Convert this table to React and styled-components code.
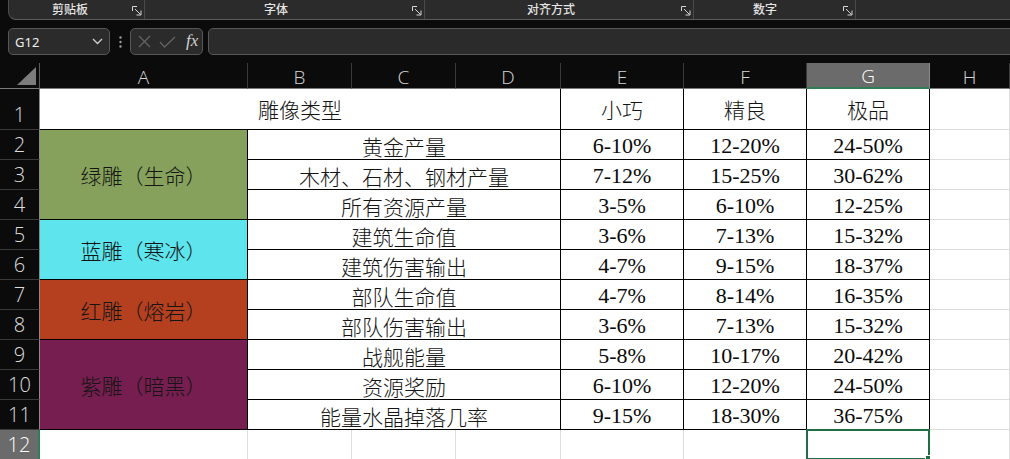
import React from 'react';
import styled, { createGlobalStyle } from 'styled-components';

const GlobalStyle = createGlobalStyle`
  html, body { margin:0; padding:0; background:#0b0b0b; overflow:hidden; }
  body { width:1010px; height:459px; font-family:"Noto Sans","Noto Sans CJK SC",sans-serif; }
`;

const groups = [
  { label: '剪贴板', w: 136, indent: 43 },
  { label: '字体', w: 280, indent: 119 },
  { label: '对齐方式', w: 269, indent: 102 },
  { label: '数字', w: 162, indent: 59 },
];

const fills = {
  green: '#86a15b',
  cyan: '#5de4ec',
  red: '#b4401f',
  purple: '#761e4f',
};

// colored label blocks in column A
const blocks = [
  { label: '绿雕（生命）', fill: fills.green, row: 2, rows: 3 },
  { label: '蓝雕（寒冰）', fill: fills.cyan, row: 5, rows: 2 },
  { label: '红雕（熔岩）', fill: fills.red, row: 7, rows: 2 },
  { label: '紫雕（暗黑）', fill: fills.purple, row: 9, rows: 3 },
];

const rows = [
  ['黄金产量', '6-10%', '12-20%', '24-50%'],
  ['木材、石材、钢材产量', '7-12%', '15-25%', '30-62%'],
  ['所有资源产量', '3-5%', '6-10%', '12-25%'],
  ['建筑生命值', '3-6%', '7-13%', '15-32%'],
  ['建筑伤害输出', '4-7%', '9-15%', '18-37%'],
  ['部队生命值', '4-7%', '8-14%', '16-35%'],
  ['部队伤害输出', '3-6%', '7-13%', '15-32%'],
  ['战舰能量', '5-8%', '10-17%', '20-42%'],
  ['资源奖励', '6-10%', '12-20%', '24-50%'],
  ['能量水晶掉落几率', '9-15%', '18-30%', '36-75%'],
];

const cols = ['A', 'B', 'C', 'D', 'E', 'F', 'G', 'H'];

const Page = styled.div`
  width:1010px;
  height:459px;
  overflow:hidden;
`;

const Ribbon = styled.div`
  display:flex;
  height:19px;
  margin-left:8px;
  background:#2b2b2b;
  border-left:1px solid #4d4d4d;
  border-bottom:1px solid #5c5c5c;
  border-bottom-left-radius:8px;
`;

const Group = styled.div`
  display:flex;
  align-items:center;
  box-sizing:border-box;
  width:${p => p.$w}px;
  flex:none;
  padding-left:${p => p.$indent}px;
  border-right:1px solid #4a4a4a;
  color:#e4e4e4;
  font-size:12px;
  font-family:"Noto Sans CJK SC",sans-serif;
  font-weight:500;
  line-height:16px;
  span { margin-top:-2px; }
`;

const Launcher = styled.svg`
  margin-left:auto;
  margin-right:2px;
  margin-top:3px;
`;

const FormulaRow = styled.div`
  display:flex;
  align-items:center;
  height:27px;
  margin-top:8px;
`;

const Box = styled.div`
  box-sizing:border-box;
  height:27px;
  background:#2b2b2b;
  border:1px solid #575757;
  border-radius:5px;
  display:flex;
  align-items:center;
`;

const NameBox = styled(Box)`
  width:102px;
  margin-left:8px;
  padding:0 6px 0 6px;
  justify-content:space-between;
  color:#eeeeee;
  font-size:13px;
  font-family:"Noto Sans",sans-serif;
`;

const Dots = styled.div`
  width:20px;
  display:flex;
  justify-content:center;
`;

const IconBox = styled(Box)`
  width:73px;
  padding-left:7px;
  gap:8px;
`;

const Fx = styled.span`
  font-family:"Liberation Serif",serif;
  font-style:italic;
  font-size:17px;
  color:#d2d2d2;
  margin-left:2px;
  margin-top:-2px;
`;

const Input = styled(Box)`
  flex:1;
  margin-left:5px;
  margin-right:-12px;
`;

const Sheet = styled.div`
  margin-top:8px;
  display:grid;
  grid-template-columns:40px 208px 104px 104px 105px 123px 123px 123px 1fr;
  grid-template-rows:26px 41px repeat(11, 30px);
  background:#0b0b0b;
`;

const Corner = styled.div`
  grid-column:1;
  grid-row:1;
  display:flex;
  align-items:flex-end;
  justify-content:flex-end;
  padding:0 3px 3px 0;
  border-right:1px solid #5a5a5a;
  border-bottom:1px solid #7a7a7a;
`;

const ColHead = styled.div`
  display:flex;
  align-items:center;
  justify-content:center;
  background:${p => (p.$active ? '#6b6b6b' : '#0b0b0b')};
  color:${p => (p.$active ? '#ffffff' : '#d6d6d6')};
  border-right:1px solid ${p => (p.$active ? '#8a8a8a' : '#3a3a3a')};
  border-bottom:${p => (p.$active ? '2px solid #2e7d55' : '1px solid #7a7a7a')};
  font-family:"Open Sans","Noto Sans",sans-serif;
  font-weight:300;
  font-size:19px;
  padding-top:2px;
`;

const RowHead = styled.div`
  grid-column:1;
  display:flex;
  align-items:flex-end;
  justify-content:center;
  background:${p => (p.$active ? '#6b6b6b' : '#0b0b0b')};
  color:${p => (p.$active ? '#ffffff' : '#dedede')};
  border-bottom:1px solid #3a3a3a;
  border-right:${p => (p.$active ? '2px solid #2e7d55' : '1px solid #8a8a8a')};
  font-family:"Open Sans","Noto Sans",sans-serif;
  font-weight:300;
  font-size:20px;
  line-height:24px;
  padding-bottom:2px;
`;

const Cell = styled.div`
  position:relative;
  grid-column:${p => p.$col} / span ${p => p.$span || 1};
  grid-row:${p => p.$row} / span ${p => p.$rows || 1};
  display:flex;
  align-items:center;
  justify-content:center;
  padding-top:${p => (p.$low ? 3 : 0)}px;
  background:${p => p.$fill || '#ffffff'};
  border-right:1px solid ${p => (p.$edge ? '#000' : '#dcdcdc')};
  border-bottom:1px solid ${p => (p.$edge ? '#000' : '#dcdcdc')};
  font-family:"Liberation Serif","Noto Sans CJK SC",serif;
  font-weight:300;
  font-size:21px;
  color:#151515;
  white-space:nowrap;
`;

const Num = styled.span`
  font-weight:400;
  font-size:22px;
  color:#0a0a0a;
`;

const Selection = styled.div`
  position:absolute;
  inset:-1px -1px -1px -1px;
  border:2px solid #1f6e44;
  &::after {
    content:'';
    position:absolute;
    right:-4px;
    bottom:-4px;
    width:5px;
    height:5px;
    background:#1f6e44;
    border:1px solid #fff;
  }
`;

const LaunchIcon = () => (
  <Launcher width="10" height="10" viewBox="0 0 10 10" fill="none" stroke="#d6d6d6" strokeWidth="1">
    <path d="M0.5 5V0.5H5" />
    <path d="M3 3L8.5 8.5M9 4.5V9H4.5" />
  </Launcher>
);

export default function App() {
  const dataCells = [];
  blocks.forEach(b => {
    dataCells.push(
      <Cell key={'a' + b.row} $col={2} $row={b.row + 1} $rows={b.rows} $fill={b.fill} $edge>
        {b.label}
      </Cell>
    );
  });
  rows.forEach((r, i) => {
    const row = i + 3;
    dataCells.push(
      <Cell key={'b' + row} $col={3} $span={3} $row={row} $edge $low>{r[0]}</Cell>,
      <Cell key={'e' + row} $col={6} $row={row} $edge $low><Num>{r[1]}</Num></Cell>,
      <Cell key={'f' + row} $col={7} $row={row} $edge $low><Num>{r[2]}</Num></Cell>,
      <Cell key={'g' + row} $col={8} $row={row} $edge $low><Num>{r[3]}</Num></Cell>,
      <Cell key={'h' + row} $col={9} $row={row} />
    );
  });

  return (
    <Page>
      <GlobalStyle />
      <Ribbon>
        {groups.map(g => (
          <Group key={g.label} $w={g.w} $indent={g.indent}>
            <span>{g.label}</span>
            <LaunchIcon />
          </Group>
        ))}
      </Ribbon>

      <FormulaRow>
        <NameBox>
          <span>G12</span>
          <svg width="11" height="7" viewBox="0 0 11 7" fill="none" stroke="#d0d0d0" strokeWidth="1.3">
            <path d="M1 1l4.5 4.5L10 1" />
          </svg>
        </NameBox>
        <Dots>
          <svg width="3" height="12" viewBox="0 0 3 12" fill="#9a9a9a">
            <circle cx="1.5" cy="1.5" r="1.2" />
            <circle cx="1.5" cy="6" r="1.2" />
            <circle cx="1.5" cy="10.5" r="1.2" />
          </svg>
        </Dots>
        <IconBox>
          <svg width="13" height="13" viewBox="0 0 13 13" stroke="#636363" strokeWidth="1.3">
            <path d="M1 1l11 11M12 1L1 12" />
          </svg>
          <svg width="17" height="12" viewBox="0 0 17 12" fill="none" stroke="#636363" strokeWidth="1.3">
            <path d="M1 6l4.5 5L16 1" />
          </svg>
          <Fx>fx</Fx>
        </IconBox>
        <Input />
      </FormulaRow>

      <Sheet>
        <Corner>
          <svg width="19" height="18" viewBox="0 0 19 18">
            <path d="M0 18H19V0Z" fill="#7c7c7c" />
          </svg>
        </Corner>
        {cols.map(c => (
          <ColHead key={c} $active={c === 'G'}>{c}</ColHead>
        ))}

        {Array.from({ length: 12 }, (_, i) => (
          <RowHead key={i} style={{ gridRow: i + 2 }} $active={i === 11}>{i + 1}</RowHead>
        ))}

        <Cell $col={2} $span={4} $row={2} $edge>雕像类型</Cell>
        <Cell $col={6} $row={2} $edge>小巧</Cell>
        <Cell $col={7} $row={2} $edge>精良</Cell>
        <Cell $col={8} $row={2} $edge>极品</Cell>
        <Cell $col={9} $row={2} />

        {dataCells}

        {cols.map((c, i) => (
          <Cell key={'r12' + c} $col={i + 2} $row={13}>
            {c === 'G' && <Selection />}
          </Cell>
        ))}
      </Sheet>
    </Page>
  );
}
